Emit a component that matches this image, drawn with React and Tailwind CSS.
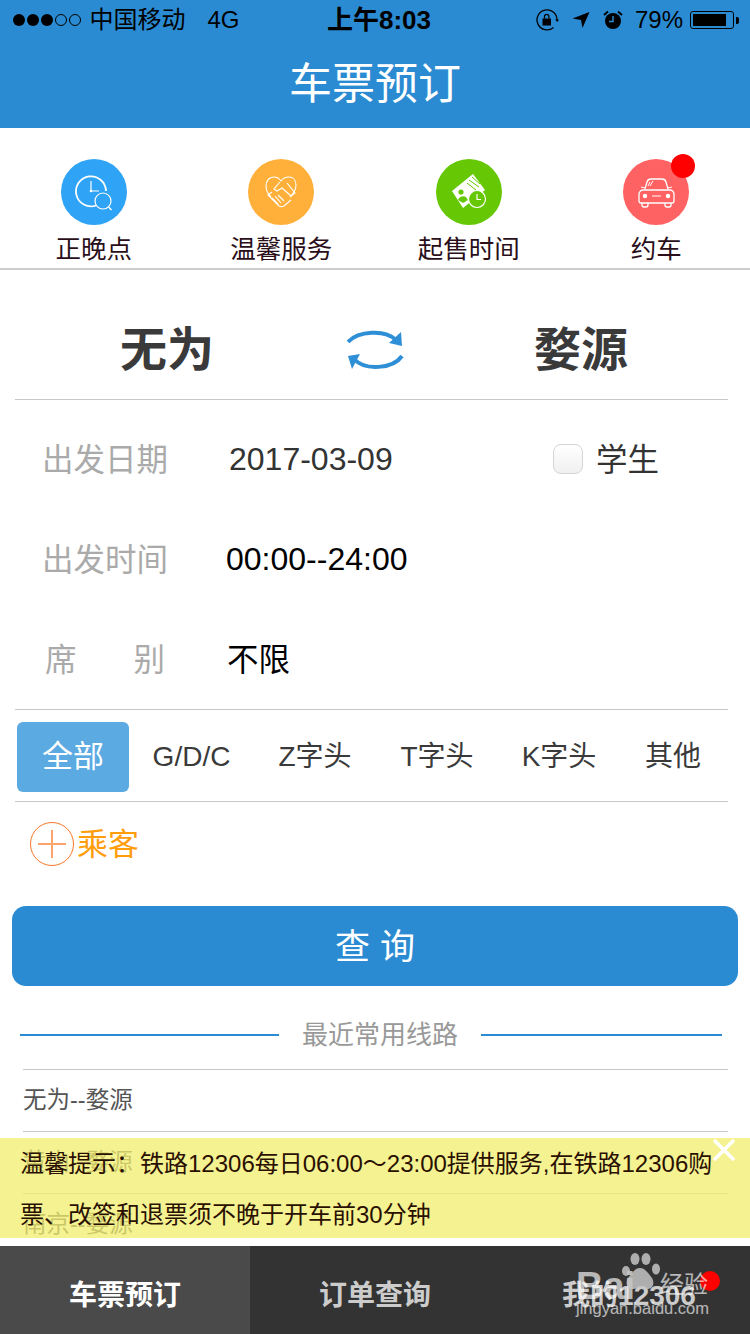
import React from "react";

const services = [
  { label: "正晚点", bg: "bg-[#2fa3f5]", icon: <ClockIcon /> },
  { label: "温馨服务", bg: "bg-[#ffb03b]", icon: <HandshakeIcon /> },
  { label: "起售时间", bg: "bg-[#66c805]", icon: <TicketIcon /> },
  { label: "约车", bg: "bg-[#ff6262]", icon: <CarIcon />, dot: true },
];

const trainTypes = [
  { label: "G/D/C", width: "w-[125px]" },
  { label: "Z字头", width: "w-[122px]" },
  { label: "T字头", width: "w-[122px]" },
  { label: "K字头", width: "w-[122px]" },
  { label: "其他", width: "w-[106px]" },
];

const routes = ["无为--婺源", "黄山--婺源", "南京--婺源"];

function ClockIcon() {
  return (
    <svg viewBox="0 0 66 66" className="w-full h-full" fill="none" stroke="#fff">
      <path d="M35 46.500A15 15 0 1 1 45 32" strokeWidth="1.800" />
      <path d="M30 22v10h8" strokeWidth="1.200" />
      <circle cx="30" cy="32" r="1.300" fill="#fff" stroke="none" />
      <circle cx="42" cy="42" r="8" strokeWidth="1.200" />
      <path d="M47.500 48l3 3" strokeWidth="1.400" />
    </svg>
  );
}

function HandshakeIcon() {
  return (
    <svg viewBox="0 0 66 66" className="w-full h-full" fill="none" stroke="#fff" strokeWidth="1.100">
      <path d="M23 38c-3-3-5-7-5-11 0-6 4-9 8-9 3 0 5 1 7 4 2-3 5-4 8-4 4 0 7 3 7 8 0 4-2 8-6 12" />
      <path d="M32 23l-6 7 3 2 5-3 9 8 4-3-8-10" />
      <path d="M24 33l-4 3 11 11c2 1 3 1 5 0l7-6" />
      <path d="M24 39l6 6M27 37l6 7M30 36l6 6" />
    </svg>
  );
}

function TicketIcon() {
  return (
    <svg viewBox="0 0 66 66" className="w-full h-full">
      <path d="M16 32L37 15l12 16-22 18z" fill="#fff" />
      <circle cx="25" cy="33" r="2.600" fill="#66c805" />
      <path d="M22 41c1-3 5-5 8-3l2 3-5 3z" fill="#66c805" />
      <path d="M33 21l10 7M31 24l9 7M36 18l8 7" stroke="#66c805" strokeWidth="1" fill="none" />
      <circle cx="41" cy="40" r="8.500" fill="#66c805" stroke="#fff" strokeWidth="1.200" />
      <path d="M41 35v5.500h4" stroke="#fff" strokeWidth="1.200" fill="none" />
    </svg>
  );
}

function CarIcon() {
  return (
    <svg viewBox="0 0 66 66" className="w-full h-full" fill="none" stroke="#fff" strokeWidth="1.300">
      <path d="M22 30l2-7c.5-2 1.500-3 4-3h11c2.500 0 3.500 1 4 3l2 7" />
      <path d="M20 31h27c2 0 4 2 4 4v7c0 1-1 2-2 2H18c-1 0-2-1-2-2v-7c0-2 2-4 4-4z" />
      <path d="M19 44v2c0 1 1 2 2 2h2c1 0 2-1 2-2v-2M42 44v2c0 1 1 2 2 2h2c1 0 2-1 2-2v-2" />
      <path d="M22 29l-4-1M45 29l4-1M29 37h9M27 23l-2 4M30 22l-3 5" strokeWidth="1" />
      <circle cx="22" cy="37" r="2.200" fill="#fff" stroke="none" />
      <circle cx="45" cy="37" r="2.200" fill="#fff" stroke="none" />
    </svg>
  );
}

function SwapIcon() {
  return (
    <svg viewBox="0 0 57 40" className="w-[57px] h-[40px]">
      <path d="M1 12C11 1 38 -1 49 10" fill="none" stroke="#2f8fd6" strokeWidth="4" />
      <path d="M54 2l1 14-13-3z" fill="#2f8fd6" />
      <path d="M55 26C46 39 18 41 7 29" fill="none" stroke="#2f8fd6" strokeWidth="4" />
      <path d="M1 26l12-2-8 15z" fill="#2f8fd6" />
    </svg>
  );
}

function StatusIcons() {
  return (
    <div className="ml-auto flex items-center">
      <svg viewBox="0 0 24 24" className="w-[24px] h-[24px]" fill="none" stroke="#000" strokeWidth="1.300">
        <path d="M22 12A10 10 0 1 0 18.500 19.500" />
        <path d="M20 11.500l2.500 2.500 1.500-2.500z" fill="#000" stroke="none" />
        <rect x="7.500" y="10.500" width="8.500" height="7" fill="#000" stroke="none" />
        <path d="M9.500 10.500V8.500a2.200 2.200 0 0 1 4.400 0v2" />
      </svg>
      <svg viewBox="0 0 18 18" className="w-[18px] h-[18px] ml-[13px]">
        <path d="M17.500 1L10.500 17 9 9 0.500 7.500z" fill="#000" />
      </svg>
      <svg viewBox="0 0 20 20" className="w-[20px] h-[20px] ml-[13px]">
        <circle cx="10" cy="11" r="8" fill="#000" />
        <path d="M10 6v5.500H6" stroke="#2b8bd2" strokeWidth="1.500" fill="none" />
        <path d="M1 5l4-3.500M19 5L15 1.500" stroke="#000" strokeWidth="1.800" />
      </svg>
      <span className="ml-[12px] text-[24px] leading-none text-black">79%</span>
      <div className="ml-[7px] w-[44px] h-[18px] border border-black rounded-[3px] p-[2px] flex">
        <div className="w-[33px] h-full bg-black" />
      </div>
      <div className="ml-[2px] w-[3px] h-[7px] bg-black rounded-r-[2px]" />
    </div>
  );
}

function Watermark() {
  return (
    <div className="absolute left-[576px] bottom-[17px] w-[135px] h-[64px] text-white/65 pointer-events-none">
      <span className="absolute left-0 top-[14px] text-[38px] leading-none font-bold">Bai</span>
      <svg viewBox="0 0 38 38" className="absolute left-[46px] top-0 w-[38px] h-[38px]" fill="#c4c4c4" fillOpacity="0.85">
        <ellipse cx="13" cy="6" rx="4.500" ry="6" />
        <ellipse cx="24" cy="6" rx="4.500" ry="6" />
        <ellipse cx="34" cy="16" rx="4" ry="5.500" />
        <ellipse cx="4" cy="18" rx="4" ry="5" />
        <path d="M18 15c5 0 8 5 12 10 3 5 1 11-5 11-3 0-5-1-7-1s-4 1-7 1c-6 0-8-6-5-11 4-5 7-10 12-10z" />
      </svg>
      <span className="absolute left-[84px] top-[20px] text-[24px] leading-none">经验</span>
      <span className="absolute left-0 bottom-[1px] text-[16.500px] leading-none">jingyan.baidu.com</span>
    </div>
  );
}

export default function App() {
  return (
    <div className="relative w-[750px] h-[1334px] overflow-hidden bg-white flex flex-col font-['Liberation_Sans','Noto_Sans_CJK_SC',sans-serif]">
      <header className="h-[128px] shrink-0 bg-[#2b8bd2]">
        <div className="h-[40px] pl-[13px] pr-[11px] flex items-center text-black">
          <div className="flex items-center w-[314px]">
            <div className="flex gap-[2.500px]">
              <span className="w-[11.500px] h-[11.500px] rounded-full bg-black" />
              <span className="w-[11.500px] h-[11.500px] rounded-full bg-black" />
              <span className="w-[11.500px] h-[11.500px] rounded-full bg-black" />
              <span className="w-[11.500px] h-[11.500px] rounded-full border border-black" />
              <span className="w-[11.500px] h-[11.500px] rounded-full border border-black" />
            </div>
            <span className="ml-[9px] text-[24px] leading-none">中国移动</span>
            <span className="ml-[22px] text-[24px] leading-none">4G</span>
          </div>
          <span className="text-[26px] leading-none font-bold">上午8:03</span>
          <StatusIcons />
        </div>
        <h1 className="h-[84px] pt-[4px] flex items-center justify-center text-[43px] leading-none font-normal text-white">
          车票预订
        </h1>
      </header>

      <main className="flex-1 min-h-0 overflow-hidden">
        <div className="h-[142px] border-b-2 border-[#cccccc] grid grid-cols-4">
          {services.map((item) => (
            <div key={item.label} className="flex flex-col items-center pt-[31px]">
              <div className={`relative w-[66px] h-[66px] rounded-full ${item.bg}`}>
                {item.icon}
                {item.dot && (
                  <span className="absolute -top-[5px] -right-[6px] w-[24px] h-[24px] rounded-full bg-[#ff0000]" />
                )}
              </div>
              <span className="mt-[9px] text-[25.500px] leading-[30px] text-[#2a0f1a]">{item.label}</span>
            </div>
          ))}
        </div>

        <div className="mx-[15px] w-[713px] h-[130px] pt-[30px] border-b border-[#c8c8c8] flex items-start">
          <span className="w-[304px] text-center text-[47px] leading-[100px] font-bold text-[#3a3a3a]">无为</span>
          <div className="w-[112px] h-[100px] flex items-center justify-center">
            <SwapIcon />
          </div>
          <span className="flex-1 pl-[3px] text-center text-[47px] leading-[100px] font-bold text-[#3a3a3a]">婺源</span>
        </div>

        <div className="pt-[9px]">
          <div className="h-[100px] flex items-center">
            <span className="ml-[42px] w-[187px] pt-[3px] text-[31.500px] leading-none text-[#aaaaaa]">出发日期</span>
            <span className="w-[324px] text-[32px] leading-none text-[#333333]">2017-03-09</span>
            <span className="w-[30px] h-[30px] rounded-[8px] border border-[#d4d4d4] bg-gradient-to-b from-white to-[#f0f0f0]" />
            <span className="ml-[13px] pt-[3px] text-[31.500px] leading-none text-[#333333]">学生</span>
          </div>
          <div className="h-[100px] flex items-center">
            <span className="ml-[42px] w-[185px] pt-[3px] text-[31.500px] leading-none text-[#aaaaaa]">出发时间</span>
            <span className="-ml-[1px] text-[32px] leading-none text-black">00:00--24:00</span>
          </div>
          <div className="h-[100px] flex items-center">
            <div className="ml-[45px] w-[120px] pt-[3px] flex justify-between text-[31.500px] leading-none text-[#aaaaaa]">
              <span>席</span>
              <span>别</span>
            </div>
            <span className="ml-[62px] pt-[3px] text-[31.500px] leading-none text-black">不限</span>
          </div>
        </div>

        <div className="mx-[15px] w-[713px] h-[93px] border-y border-[#c8c8c8] flex items-center pl-[2px] pt-[2px]">
          <div className="w-[112px] h-[70px] rounded-[6px] bg-[#5baae2] flex items-center justify-center text-[31px] leading-none text-white">
            全部
          </div>
          {trainTypes.map((type) => (
            <span key={type.label} className={`${type.width} text-center text-[28px] leading-none text-[#3a3a3a]`}>
              {type.label}
            </span>
          ))}
        </div>

        <div className="h-[64px] pl-[30px] pt-[20px] flex items-center">
          <div className="relative w-[44px] h-[44px] rounded-full border-[1.500px] border-[#f8792a] flex items-center justify-center">
            <span className="absolute w-[28px] h-[1.500px] bg-[#fba46c]" />
            <span className="absolute w-[1.500px] h-[28px] bg-[#fba46c]" />
          </div>
          <span className="ml-[3px] text-[31px] leading-none text-[#ff9d0a]">乘客</span>
        </div>

        <button className="block mx-[12px] mt-[40px] w-[726px] h-[80px] pl-[10px] rounded-[14px] bg-[#2b8bd2] text-[35px] leading-none tracking-[10px] text-white">
          查询
        </button>

        <div className="mt-[32px] pl-[20px] flex items-center">
          <span className="w-[259px] h-[2px] bg-[#2b8bd2]" />
          <span className="w-[202px] text-center text-[26px] leading-[34px] text-[#999999]">最近常用线路</span>
          <span className="w-[241px] h-[2px] bg-[#2b8bd2]" />
        </div>

        <ul className="mt-[17px] ml-[23px] w-[705px]">
          {routes.map((route) => (
            <li key={route} className="h-[62px] border-t border-[#c8c8c8] flex items-center text-[23.500px] leading-none text-[#555555]">
              {route}
            </li>
          ))}
        </ul>
      </main>

      <nav className="relative h-[88px] shrink-0 bg-[#333333] grid grid-cols-3 text-[28px] leading-none">
        <div className="bg-[#4a4a4a] pt-[12px] flex items-center justify-center font-bold text-white">车票预订</div>
        <div className="pt-[12px] flex items-center justify-center text-[#cccccc] font-bold">订单查询</div>
        <div className="pt-[12px] pl-[8px] flex items-center justify-center text-[#cccccc] font-bold">我的12306</div>
        <span className="absolute left-[700px] top-[25px] w-[20px] h-[20px] rounded-full bg-[#ff0000]" />
      </nav>
      <Watermark />

      <div className="absolute left-0 top-[1138px] w-[750px] h-[100px] bg-[#f2ee6e]/75 pl-[20px] text-[24px] leading-[51px] text-[#2a1000]">
        <p className="whitespace-nowrap">温馨提示：铁路12306每日06:00～23:00提供服务,在铁路12306购</p>
        <p className="whitespace-nowrap">票、改签和退票须不晚于开车前30分钟</p>
        <svg viewBox="0 0 24 24" className="absolute right-[14px] top-0 w-[24px] h-[24px]" stroke="#fff" strokeWidth="3.500">
          <path d="M2 2l20 20M22 2L2 22" />
        </svg>
      </div>
    </div>
  );
}
